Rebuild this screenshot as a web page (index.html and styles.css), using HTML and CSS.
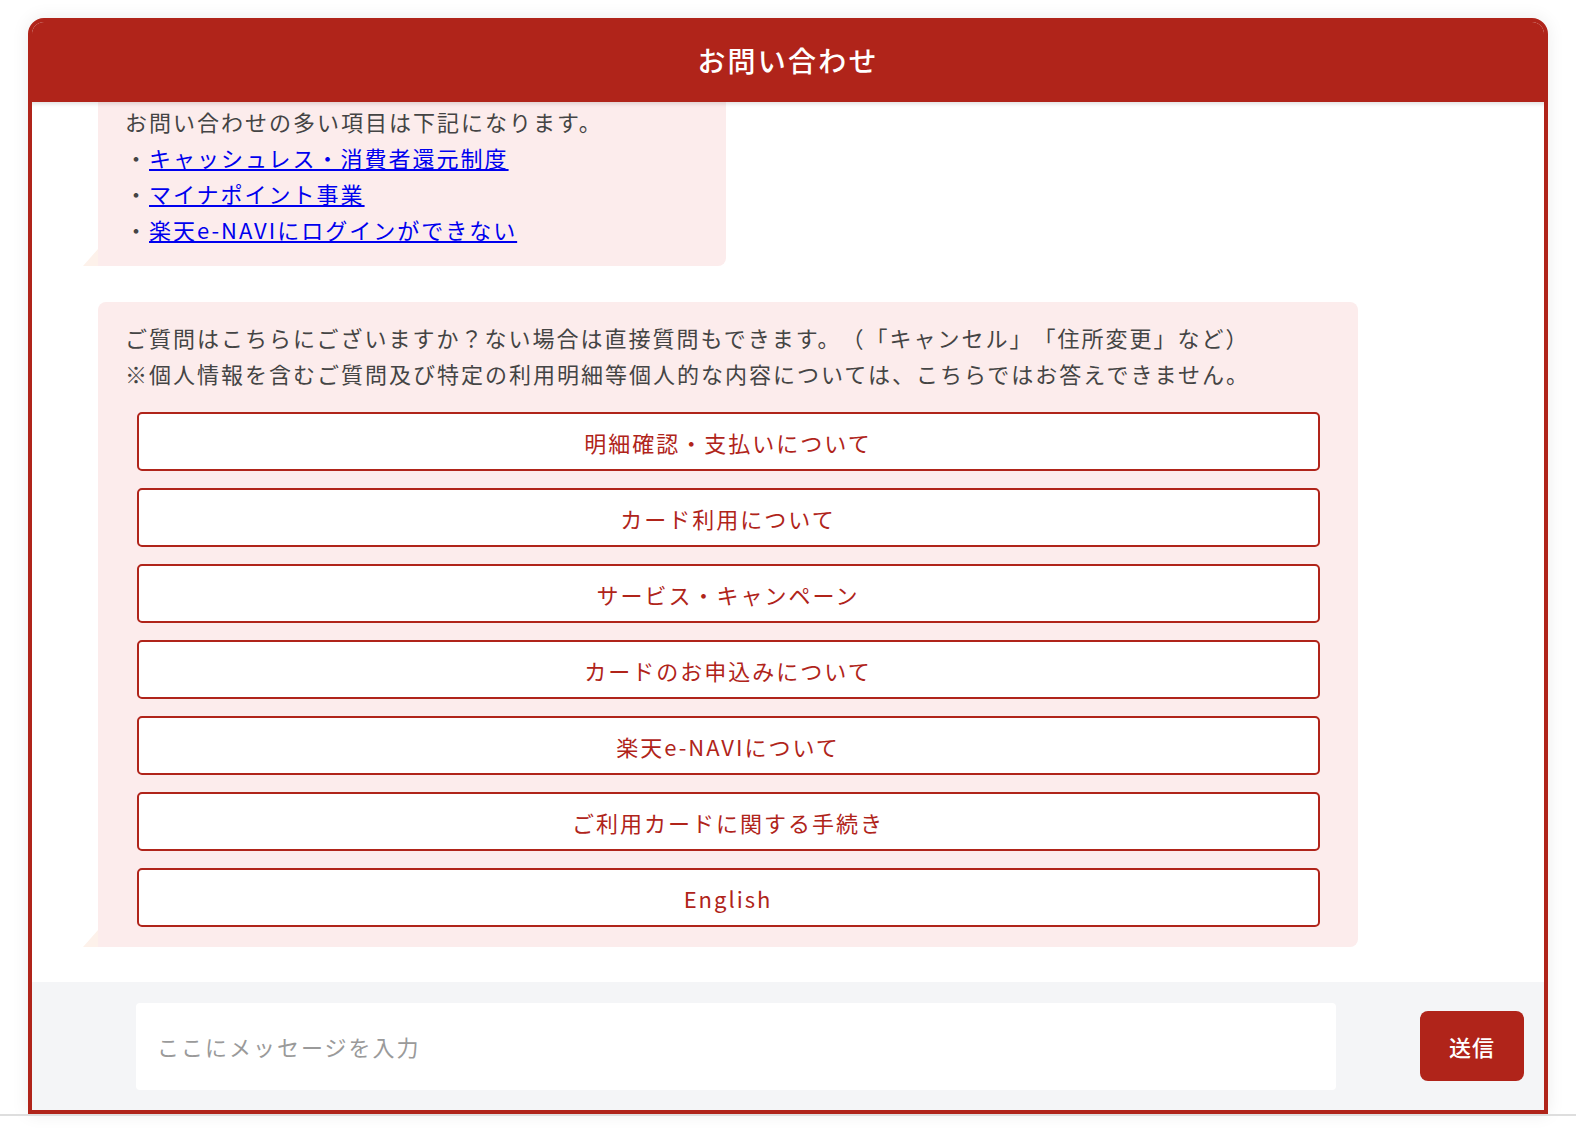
FILE: index.html
```html
<!DOCTYPE html>
<html lang="ja">
<head>
    <meta charset="UTF-8">
    <meta name="viewport" content="width=device-width, initial-scale=1.0">
    <title>お問い合わせ</title>
    <link rel="stylesheet" href="styles.css">
</head>
<body>
    <div class="chat-widget">
        <div class="chat-header">お問い合わせ</div>

        <div class="chat-messages">
            <div class="bubble bubble-top">
                <p>お問い合わせの多い項目は下記になります。</p>
                <p>・<a href="#">キャッシュレス・消費者還元制度</a></p>
                <p>・<a href="#">マイナポイント事業</a></p>
                <p>・<a href="#">楽天e-NAVIにログインができない</a></p>
            </div>

            <div class="bubble bubble-wide">
                <p>ご質問はこちらにございますか？ない場合は直接質問もできます。（「キャンセル」「住所変更」など）</p>
                <p>※個人情報を含むご質問及び特定の利用明細等個人的な内容については、こちらではお答えできません。</p>
                <div class="choices">
                    <button class="choice">明細確認・支払いについて</button>
                    <button class="choice">カード利用について</button>
                    <button class="choice">サービス・キャンペーン</button>
                    <button class="choice">カードのお申込みについて</button>
                    <button class="choice">楽天e-NAVIについて</button>
                    <button class="choice">ご利用カードに関する手続き</button>
                    <button class="choice">English</button>
                </div>
            </div>
        </div>

        <div class="chat-input">
            <input type="text" class="message-box" placeholder="ここにメッセージを入力">
            <button class="send">送信</button>
        </div>
    </div>
    <div class="page-rule"></div>
</body>
</html>
```

FILE: styles.css
```css
html, body {
    height: 100%;
    overflow: hidden;
}
body {
    margin: 0;
    padding-top: 18px;
    box-sizing: border-box;
    background: #fff;
    font-family: "Noto Sans CJK JP", "Noto Sans", sans-serif;
    color: #444;
    text-spacing-trim: space-all;
}
.chat-widget {
    box-sizing: border-box;
    height: 1096px;
    margin: 0 28px;
    display: flex;
    flex-direction: column;
    border: 4px solid #b0241a;
    border-radius: 16px 16px 0 0;
    background: #fff;
    box-shadow: 0 0 18px rgba(0, 0, 0, 0.08);
    overflow: hidden;
}
.chat-header {
    position: relative;
    z-index: 2;
    flex: 0 0 84px;
    margin: -4px -4px 0;
    display: flex;
    align-items: center;
    justify-content: center;
    background: #b0241a;
    color: #fff;
    font-size: 28px;
    font-weight: 500;
    letter-spacing: 2.2px;
    box-shadow: 0 2px 4px rgba(0, 0, 0, 0.12);
}
.chat-messages {
    flex: 1;
    overflow: hidden;
    padding-left: 66px;
}
.bubble {
    position: relative;
    box-sizing: border-box;
    background: #fcecec;
    border-radius: 8px 8px 8px 0;
    padding: 17px 27px 18.5px;
    font-size: 22px;
    line-height: 36px;
    letter-spacing: 2px;
}
.bubble::before {
    content: "";
    position: absolute;
    left: -15px;
    bottom: 0;
    border-left: 15px solid transparent;
    border-bottom: 17px solid #fdf1ea;
}
.bubble p {
    margin: 0;
}
.bubble a {
    color: #0000ee;
}
.bubble-top {
    width: 628px;
    margin-top: -16px;
}
.bubble-wide {
    width: 1260px;
    margin-top: 36.5px;
    padding-bottom: 20px;
}
.choices {
    display: flex;
    flex-direction: column;
    gap: 17px;
    margin: 21px 11.5px 0;
}
.choice {
    height: 59px;
    border: 2px solid #b0241a;
    border-radius: 5px;
    background: #fff;
    color: #b0241a;
    font-family: inherit;
    font-size: 22px;
    letter-spacing: 2px;
    text-spacing-trim: space-all;
    cursor: pointer;
}
.chat-input {
    flex: 0 0 128px;
    display: flex;
    align-items: center;
    gap: 84px;
    padding: 0 20px 0 104px;
    background: #f4f5f7;
}
.message-box {
    flex: 1;
    height: 87px;
    box-sizing: border-box;
    border: none;
    border-radius: 4px;
    padding: 0 21px;
    background: #fff;
    font-family: inherit;
    font-size: 22px;
    letter-spacing: 2px;
    outline: none;
}
.message-box::placeholder {
    color: #9a9a9a;
}
.send {
    width: 104px;
    height: 70px;
    border: none;
    border-radius: 8px;
    background: #b0241a;
    color: #fff;
    font-family: inherit;
    font-size: 22px;
    font-weight: 500;
    letter-spacing: 1px;
    cursor: pointer;
}
.page-rule {
    height: 2px;
    background: #dedede;
}
```
